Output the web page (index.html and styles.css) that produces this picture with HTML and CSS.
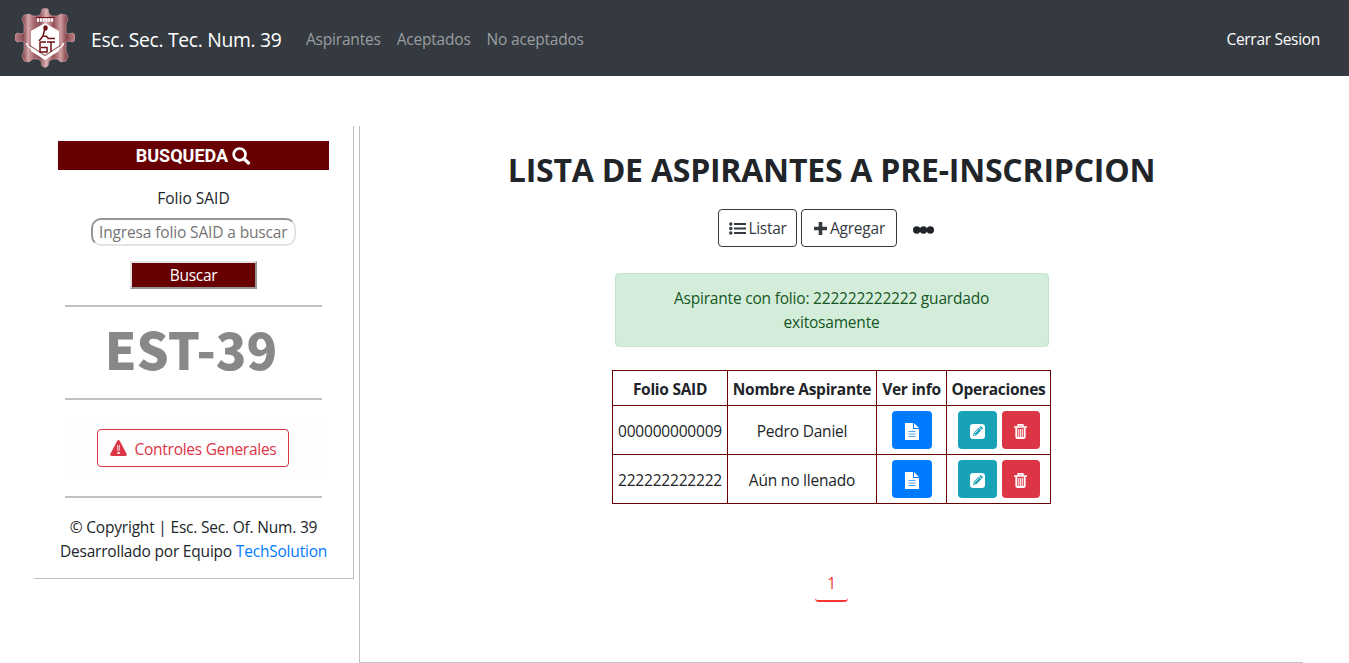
FILE: index.html
```html
<!DOCTYPE html>
<html lang="es">
<head>
<meta charset="utf-8">
<title>Lista de aspirantes</title>
<link rel="stylesheet" href="styles.css">
</head>
<body>
<svg width="0" height="0" class="defs">
  <defs>
    <linearGradient id="metal" x1="0" x2="1" y1="0" y2="0">
      <stop offset="0" stop-color="#b98087"/><stop offset=".14" stop-color="#8a4a50"/><stop offset=".22" stop-color="#d3a5a8"/><stop offset=".32" stop-color="#a4666b"/><stop offset=".42" stop-color="#90545a"/><stop offset=".52" stop-color="#deb4b6"/><stop offset=".64" stop-color="#955056"/><stop offset=".76" stop-color="#cf9fa2"/><stop offset=".86" stop-color="#85454b"/><stop offset="1" stop-color="#bd878c"/>
    </linearGradient>
    <symbol id="file" viewBox="0 0 14 17"><path fill="#fff" d="M0 0h8v6h6v11H0zM9 0l5 5H9z"/><path stroke="#007bff" stroke-opacity=".7" d="M3.5 8.5h7M3.5 11h7M3.5 13.5h7"/></symbol>
    <symbol id="edit" viewBox="0 0 15 15"><rect width="15" height="15" rx="3.2" fill="#fff"/><path fill="#17a2b8" d="M3 12l.8-3.3 4.9-4.9 2.5 2.5-4.9 4.9zM9.3 3.2l.8-.8q.6-.4 1.1 0l1.4 1.4q.4.6 0 1.1l-.8.8z"/><path stroke="#fff" stroke-width=".8" d="M4.7 9.3l4-4M3.8 10l1.3 1.3"/></symbol>
    <symbol id="trash" viewBox="0 0 13 15"><path fill="none" stroke="#fff" stroke-width="1.6" d="M4.200 2.500V.9h4.600v1.600M0 3h13"/><path fill="none" stroke="#fff" stroke-width="1.900" d="M2.300 3.500v9.200q0 1.300 1.300 1.300h5.800q1.300 0 1.300-1.300V3.500"/><path stroke="#fff" stroke-width="1.200" stroke-opacity=".85" d="M4.700 5v8M6.500 5v8M8.300 5v8"/></symbol>
  </defs>
</svg>
<nav class="navbar">
  <a class="brand">
    <svg class="logo" viewBox="0 0 60 60">
      <path fill="url(#metal)" stroke="#cda4a7" stroke-width=".6" stroke-linejoin="round" d="M26 6l1-5 3-.5 3 .5 1 5 3 2h5l4-2 5 1 2 4-2 5v9l2 1 5-1 2 2v5l-2 2-5-1-2 1v9l2 5-2 5-5 1-4-3h-5l-3 2-1 5-3 1.500-3-1.500-1-5-3-2h-5l-4 3-5-1-2-5 2-5v-9l-2-1-5 1-2-2v-5l2-2 5 1 2-1v-9l-2-5 2-4 5-1 4 2h5z"/>
      <path fill="#fff" d="M30 15l14 8v20L30 52 16 43V23z"/>
      <path fill="none" stroke="#fff" stroke-width="1.500" d="M11.500 35q1 4 6 6l12.500 9 12.500-9q5-2 6-6"/>
      <path fill="none" stroke="#a06a6e" stroke-width="1.200" d="M14 37l16 10.500L46 37"/>
      <path stroke="#fff" stroke-width="3.500" stroke-dasharray="2 .8" d="M22 12h17"/>
      <path stroke="#781018" d="M21 9.500h19"/>
      <ellipse cx="30.500" cy="20" rx="2.200" ry="2.700" fill="#701018"/>
      <path fill="none" stroke="#701018" stroke-width="1.500" d="M29.500 22L28 28l3.500.5 2 2M28 28l-4 5M25 34h6M25 34v10h7v-4.500h-6M32 30.500h8M32 34h8M36 34v10"/>
    </svg>
    <span class="brand-name">Esc. Sec. Tec. Num. 39</span>
  </a>
  <div class="links"><a>Aspirantes</a><a>Aceptados</a><a>No aceptados</a></div>
  <a class="logout">Cerrar Sesion</a>
</nav>
<div class="page">
  <aside class="sidebar">
    <h2 class="banner"><span>BUSQUEDA</span><svg width="19" height="18" viewBox="0 0 19 18"><circle cx="7.600" cy="7.400" r="5.900" fill="none" stroke="#fff" stroke-width="2.700"/><path stroke="#fff" stroke-width="3.200" stroke-linecap="round" d="M12.200 12l4.300 4"/></svg></h2>
    <label class="label">Folio SAID</label>
    <input class="search" placeholder="Ingresa folio SAID a buscar">
    <button class="submit">Buscar</button>
    <div class="rule"></div>
    <div class="est">EST-39</div>
    <div class="rule"></div>
    <div class="panel"><a class="danger"><svg width="17" height="16" viewBox="0 0 17 16"><path fill="#dc3545" d="M7.300.7q1.200-1.400 2.400 0l7 13.200q.7 2-1.200 2.100h-14Q-.4 15.900.3 13.900z"/><path stroke="#fff" stroke-width="2.200" d="M8.500 5v5.500M8.500 12v2"/><path stroke="#dc3545" stroke-width=".7" d="M8.500 5v5"/></svg><span>Controles Generales</span></a></div>
    <div class="rule last"></div>
    <p class="copy">© Copyright | Esc. Sec. Of. Num. 39<br>Desarrollado por Equipo <a>TechSolution</a></p>
  </aside>
  <main class="main">
    <h1 class="title">LISTA DE ASPIRANTES A PRE-INSCRIPCION</h1>
    <div class="actions">
      <a class="btn listar"><svg width="17" height="13" viewBox="0 0 17 13"><path stroke="#343a40" stroke-width="2.200" d="M5 2h12M5 6.500h12M5 11h12"/><g fill="#343a40"><circle cx="1.800" cy="2" r="1.700"/><circle cx="1.800" cy="6.500" r="1.700"/><circle cx="1.800" cy="11" r="1.700"/></g></svg><span>Listar</span></a>
      <a class="btn agregar"><svg width="13" height="13" viewBox="0 0 13 13"><path stroke="#343a40" stroke-width="3.600" d="M6.500 0v13M0 6.500h13"/></svg><span>Agregar</span></a>
      <svg class="dots" width="21" height="8" viewBox="0 0 21 8"><g fill="#212529"><circle cx="3.700" cy="4" r="3.700"/><circle cx="10.500" cy="4" r="3.700"/><circle cx="17.300" cy="4" r="3.700"/></g></svg>
    </div>
    <div class="alert">Aspirante con folio: 222222222222 guardado<br>exitosamente</div>
    <table class="list">
      <colgroup><col class="w1"><col class="w2"><col class="w3"><col class="w4"></colgroup>
      <tr><th>Folio SAID</th><th>Nombre Aspirante</th><th>Ver info</th><th>Operaciones</th></tr>
      <tr><td>000000000009</td><td>Pedro Daniel</td><td class="cell"><div class="ops"><a class="op info"><svg width="14" height="17"><use href="#file"/></svg></a></div></td><td class="cell"><div class="ops"><a class="op edit"><svg width="15" height="15"><use href="#edit"/></svg></a><a class="op del"><svg width="13" height="15"><use href="#trash"/></svg></a></div></td></tr>
      <tr><td>222222222222</td><td>Aún no llenado</td><td class="cell"><div class="ops"><a class="op info"><svg width="14" height="17"><use href="#file"/></svg></a></div></td><td class="cell"><div class="ops"><a class="op edit"><svg width="15" height="15"><use href="#edit"/></svg></a><a class="op del"><svg width="13" height="15"><use href="#trash"/></svg></a></div></td></tr>
    </table>
    <a class="pager">1</a>
  </main>
</div>
</body>
</html>
```
FILE: styles.css
```css
* { box-sizing: border-box; }
body { margin: 0; font: 15.5px/24px "Open Sans", "Noto Sans", sans-serif; letter-spacing: -.2px; color: #212529; background: #fff; height: 663px; overflow: hidden; }
a { white-space: nowrap; }
svg { flex: none; display: block; }
.defs { position: absolute; }
.navbar { height: 76px; background: #343a40; display: flex; align-items: center; padding: 0 29px 0 15px; }
.brand { display: flex; align-items: center; gap: 16px; color: #fff; font-size: 19.3px; letter-spacing: -.3px; width: 291px; }
.logo { width: 60px; height: 60px; }
.brand-name { padding-top: 4px; }
.links { display: flex; gap: 16px; color: #9a9da0; padding-top: 2px; margin-top: -1px; }
.logout { margin-left: auto; color: #fff; padding-top: 2px; margin-top: -1px; letter-spacing: -.3px; }
.page { display: flex; align-items: flex-start; padding: 50px 46px 0 34px; gap: 5px; }
.sidebar { width: 320px; height: 453px; border: solid #c0c0c0; border-width: 0 1px 1px 0; padding-top: 15px; display: flex; flex-direction: column; align-items: center; }
.banner { margin: 0; width: 271px; height: 29px; background: #680003; color: #fff; font: bold 18px/29px Roboto, sans-serif; letter-spacing: 0; display: flex; align-items: center; justify-content: center; gap: 4px; }
.label { margin-top: 16px; letter-spacing: 0; }
.search { margin-top: 8px; width: 205px; height: 28px; border: 2px solid; border-color: #959595 #e3e3e3 #e3e3e3 #959595; border-radius: 10px; padding: 1px 5px 1px 6px; font: inherit; letter-spacing: -.14px; }
.search::placeholder { color: #757575; opacity: 1; }
.submit { margin-top: 15px; width: 127px; height: 28px; padding: 0; border: 2px solid; border-color: #e3e3e3 #959595 #959595 #e3e3e3; background: #680003; color: #fff; font: inherit; letter-spacing: -.3px; line-height: 24px; }
.rule { width: 257px; height: 2px; flex: none; background: #c0c0c0; margin-top: 16px; }
.last { margin-top: 17px; }
.est { height: 75px; line-height: 83px; color: #888; font-family: "Noto Sans CJK JP", sans-serif; font-weight: 900; font-size: 50.5px; letter-spacing: 0; padding-right: 5px; }
.panel { width: 255px; height: 63px; margin-top: 16px; background: #fdfdfd; display: flex; justify-content: center; padding: 13px 1px 0 0; }
.danger { width: 192px; height: 38px; border: 1px solid #dc3545; border-radius: 4px; color: #dc3545; display: flex; align-items: center; justify-content: center; gap: 8px; letter-spacing: -.26px; }
.danger span { padding-top: 2px; }
.copy { margin: 17px 0 0; text-align: center; white-space: nowrap; }
.copy a { color: #007bff; }
.main { width: 944px; height: 537px; border: solid #c0c0c0; border-width: 0 0 1px 1px; display: flex; flex-direction: column; align-items: center; }
.title { margin: 25px 0 0; font-size: 32px; letter-spacing: -.23px; line-height: 38px; font-weight: 700; white-space: nowrap; }
.actions { display: flex; align-items: center; gap: 4px; margin-top: 20px; padding-right: 12px; }
.btn { height: 38px; border: 1px solid #343a40; border-radius: 4px; color: #343a40; display: flex; align-items: center; justify-content: center; gap: 3px; }
.listar { width: 79px; gap: 2px; padding-left: 2px; letter-spacing: -.3px; }
.agregar { width: 96px; padding-left: 2px; }
.dots { margin: 4px 0 0 12px; }
.alert { width: 434px; height: 74px; margin-top: 26px; padding: 12px; text-align: center; background: #d4edda; border: 1px solid #c3e6cb; border-radius: 4px; color: #155724; }
.list { width: 439px; margin-top: 23px; border-collapse: collapse; table-layout: fixed; text-align: center; white-space: nowrap; }
.w1 { width: 115px; } .w2 { width: 149px; } .w3 { width: 70px; } .w4 { width: 104px; }
.list th, .list td { border: 1px solid #680003; padding: 0; }
.list th { height: 35px; padding-top: 2px; letter-spacing: -.28px; }
.list td { height: 49px; padding-top: 1px; }
.list .cell { padding: 0 0 1px; }
.ops { display: flex; justify-content: center; gap: 5px; }
.op { height: 38px; border-radius: 4px; display: flex; align-items: center; justify-content: center; padding-top: 3px; }
.info { width: 40px; background: #007bff; }
.edit { width: 39px; background: #17a2b8; }
.del { width: 38px; background: #dc3545; }
.pager { margin-top: 61px; width: 33px; height: 37px; border-bottom: 2px solid #fb3434; border-radius: 4px; text-align: center; line-height: 36px; color: #fb3434; }
```
